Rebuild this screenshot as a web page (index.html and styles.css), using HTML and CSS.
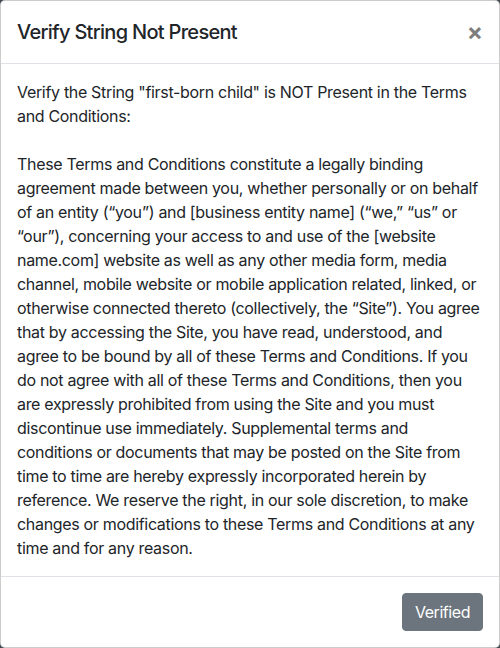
FILE: index.html
```html
<!DOCTYPE html>
<html lang="en">
<head>
<meta charset="utf-8">
<title>Verify String Not Present</title>
<link rel="stylesheet" href="styles.css">
</head>
<body>
<div class="modal">
  <div class="modal-header">
    <h5 class="modal-title">Verify String Not Present</h5>
    <button class="close" type="button" aria-label="Close">×</button>
  </div>
  <div class="modal-body">
    <p class="text">Verify the String "first-born child" is NOT Present in the Terms<br>and Conditions:<br><br>These Terms and Conditions constitute a legally binding<br>agreement made between you, whether personally or on behalf<br>of an entity (“you”) and [business entity name] (“we,” “us” or<br>“our”), concerning your access to and use of the [website<br>name.com] website as well as any other media form, media<br>channel, mobile website or mobile application related, linked, or<br>otherwise connected thereto (collectively, the “Site”). You agree<br>that by accessing the Site, you have read, understood, and<br>agree to be bound by all of these Terms and Conditions. If you<br>do not agree with all of these Terms and Conditions, then you<br>are expressly prohibited from using the Site and you must<br>discontinue use immediately. Supplemental terms and<br>conditions or documents that may be posted on the Site from<br>time to time are hereby expressly incorporated herein by<br>reference. We reserve the right, in our sole discretion, to make<br>changes or modifications to these Terms and Conditions at any<br>time and for any reason.</p>
  </div>
  <div class="modal-footer">
    <button class="btn" type="button">Verified</button>
  </div>
</div>
</body>
</html>
```

FILE: styles.css
```css
* { box-sizing: border-box; }
html, body { margin: 0; height: 100%; }
body {
  background: #3f4650;
  font-family: Inter, "Noto Sans", sans-serif;
  color: #212529;
  font-size: 16px;
  line-height: 24px;
}
.modal {
  width: 500px;
  height: 648px;
  background: #fff;
  border: 1px solid rgba(0,0,0,.2);
  border-radius: 5px;
  display: flex;
  flex-direction: column;
  overflow: hidden;
}
.modal-header {
  display: flex;
  align-items: flex-start;
  padding: 16px;
  border-bottom: 1px solid #dee2e6;
}
.modal-title {
  margin: 0;
  font-size: 20px;
  line-height: 30px;
  font-weight: 500;
  letter-spacing: -0.7px;
}
.close {
  margin: -16px -16px -16px auto;
  padding: 16px;
  background: transparent;
  border: 0;
  font-family: Inter, sans-serif;
  font-size: 24px;
  line-height: 30px;
  font-weight: 700;
  color: #000;
  opacity: .5;
  cursor: pointer;
}
.modal-body {
  flex: 1;
  padding: 16px;
}
.text {
  margin: 0;
  white-space: nowrap;
  letter-spacing: -0.32px;
}
.modal-footer {
  display: flex;
  justify-content: flex-end;
  align-items: center;
  padding: 12px;
  border-top: 1px solid #dee2e6;
}
.btn {
  margin: 4px;
  height: 38px;
  padding: 6px 12px;
  font-family: inherit;
  font-size: 16px;
  line-height: 24px;
  letter-spacing: -0.45px;
  color: #fff;
  background: #6c757d;
  border: 1px solid #6c757d;
  border-radius: 4px;
}
```
